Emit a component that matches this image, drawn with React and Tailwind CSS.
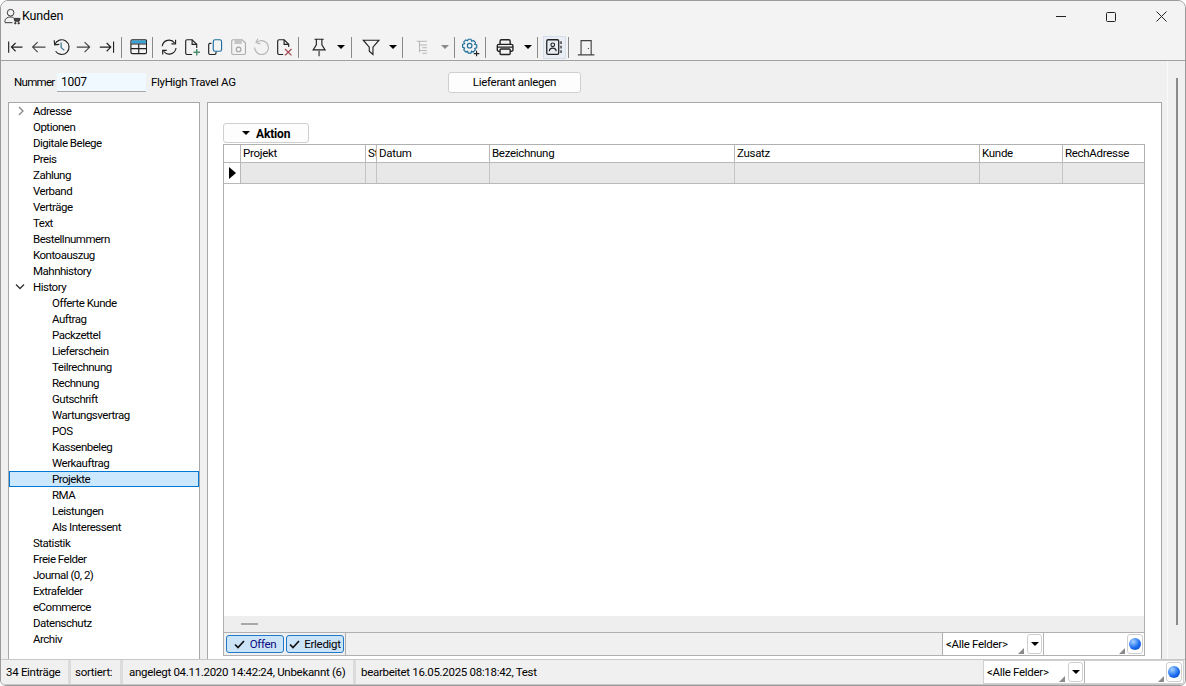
import React from "react";

const S = ({ w = 22, h = 22, children, className = "" }) => (
  <svg width={w * 0.92} height={h * 0.92} viewBox={`0 0 ${w} ${h}`} fill="none" stroke="#222" strokeWidth="1.250" className={className}>{children}</svg>
);

const Slot = ({ children, className = "w-[23px]" }) => (
  <div className={`flex h-[22px] shrink-0 items-center justify-center ${className}`}>{children}</div>
);
const Sep = ({ className = "" }) => <div className={`h-[21px] w-px shrink-0 bg-[#8a8a8a] ${className}`} />;
const Caret = ({ className = "", color = "border-t-black" }) => (
  <div className={`h-0 w-0 shrink-0 border-x-[4px] border-t-[4px] border-x-transparent ${color} ${className}`} />
);

const Icons = {
  first: <S><path d="M4 5v12M19 11H7M11.5 6.5 7 11l4.500 4.500" /></S>,
  back: <S><path d="M19 11H5M10.500 5.500 5 11l5.500 5.500" stroke="#444" /></S>,
  history: (
    <S>
      <path d="M4.200 8A8 8 0 1 1 5 15.500" />
      <path d="M3.500 3.500 4 8.500l5-.5" />
      <path d="M11 6v5.500l3.500 3" stroke="#2a6f8a" />
    </S>
  ),
  fwd: <S><path d="M3 11h14M11.500 5.500 17 11l-5.500 5.500" stroke="#444" /></S>,
  last: <S><path d="M18 5v12M3 11h12M10.500 6.500 15 11l-4.500 4.500" /></S>,
  table: (
    <S w={19} h={19}>
      <rect x="1" y="2" width="17" height="15" rx="1.500" />
      <path d="M1.500 2.800h16v3.200h-16z" fill="#38a3d8" stroke="none" />
      <path d="M1 6.500h17M1 11.500h17M9.500 6.500V17" />
    </S>
  ),
  refresh: (
    <S>
      <path d="M3.500 10A7.500 7.500 0 0 1 17 6.500" />
      <path d="M18 3v4.500h-4.500" />
      <path d="M18.500 12A7.500 7.500 0 0 1 5 15.500" />
      <path d="M4 19v-4.500h4.500" />
    </S>
  ),
  newDoc: (
    <S>
      <path d="M11 19H5.500a1.500 1.500 0 0 1-1.500-1.500v-13A1.500 1.500 0 0 1 5.500 3H11l5 5v4" />
      <path d="M11 3v5h5" />
      <path d="M16 13v7M12.500 16.500h7" stroke="#4c8c6f" strokeWidth="1.600" />
    </S>
  ),
  copy: (
    <S>
      <path d="M7 7H5.500A1.500 1.500 0 0 0 4 8.500v9A1.500 1.500 0 0 0 5.500 19h5a1.500 1.500 0 0 0 1.500-1.500V16" />
      <rect x="9" y="3" width="9" height="12.500" rx="2" stroke="#1b6e9f" />
    </S>
  ),
  save: (
    <S>
      <path d="M4 4.500A1.500 1.500 0 0 1 5.500 3h10L19 6.500v11a1.500 1.500 0 0 1-1.500 1.500h-12A1.500 1.500 0 0 1 4 17.500z" stroke="#adadad" />
      <path d="M7 3h8v4.500H7z" fill="#c4c4c4" stroke="none" />
      <circle cx="11.500" cy="13.500" r="2.500" stroke="#a5a5a5" />
    </S>
  ),
  undo: (
    <S>
      <path d="M7 5.500A7.500 7.500 0 1 1 4 11.500" stroke="#b5b5b5" />
      <path d="M7.500 2 5.500 6l4.500 1.500" stroke="#b5b5b5" />
    </S>
  ),
  del: (
    <S>
      <path d="M10 19H5.500A1.500 1.500 0 0 1 4 17.500v-13A1.500 1.500 0 0 1 5.500 3H11l5 5v3" />
      <path d="M11 3v5h5" />
      <path d="m12 13 7 7M19 13l-7 7" stroke="#a34a55" strokeWidth="1.400" />
    </S>
  ),
  pin: (
    <S>
      <path d="M6 2.500h10M8 2.500v6L4.500 14h13L14 8.500v-6" />
      <path d="M11 14v7" stroke="#777" strokeWidth="2" />
    </S>
  ),
  filter: <S><path d="M2.500 3.500h17L13 11v8l-4-3.500V11z" /></S>,
  tree: (
    <S w={18} h={18}>
      <path d="M3 2.500h11M6 2.500v12M6 6.500h8M9 9.500h5M6 12.500h8M9 15.500h5" stroke="#b0b0b0" strokeWidth="1" />
    </S>
  ),
  gear: (
    <S>
      <path d="M9 2.500h3l.7 2.200 2-.9 2.200 2.200-.9 2 2.200.7v3l-2.200.7.7 1.700-2.200 2.200-2-.9-.6 2.100H9l-.7-2.100-2 .9-2.200-2.200.9-2L2.800 11V8l2.200-.7-.9-2 2.200-2.200 2 .9z" stroke="#1f6f9c" />
      <circle cx="10.500" cy="9.500" r="2.500" stroke="#1f6f9c" />
      <path d="M18 15v6M15 18h6" stroke="#222" />
    </S>
  ),
  print: (
    <S>
      <path d="M5.500 8V4.500A1.500 1.500 0 0 1 7 3h8a1.500 1.500 0 0 1 1.500 1.500V8" strokeWidth="1.500" />
      <path d="M5.500 15.500H4A1.500 1.500 0 0 1 2.500 14V9.500A1.500 1.500 0 0 1 4 8h14a1.500 1.500 0 0 1 1.500 1.500V14a1.500 1.500 0 0 1-1.500 1.500h-1.500" strokeWidth="1.500" />
      <rect x="5.500" y="13" width="11" height="6" rx="1" strokeWidth="1.500" />
      <path d="M2.500 11h17" strokeWidth="1.500" />
    </S>
  ),
  contact: (
    <S>
      <rect x="3" y="3" width="13" height="16" rx="1.500" strokeWidth="1.400" />
      <circle cx="9.500" cy="8.500" r="2" />
      <path d="M5.800 15.500c0-4.500 7.400-4.500 7.400 0" />
      <path d="M18.500 4.500v3M18.500 9.500v3M18.500 14.500v3" strokeWidth="1.400" />
    </S>
  ),
  door: (
    <S>
      <path d="M5.500 19V4h11v15M2 19.500h18" stroke="#444" />
      <path d="M13.500 12v1" stroke="#444" />
    </S>
  ),
};

const tree = [
  ["Adresse", 1, "r"], ["Optionen", 1], ["Digitale Belege", 1], ["Preis", 1], ["Zahlung", 1], ["Verband", 1],
  ["Verträge", 1], ["Text", 1], ["Bestellnummern", 1], ["Kontoauszug", 1], ["Mahnhistory", 1], ["History", 1, "d"],
  ["Offerte Kunde", 2], ["Auftrag", 2], ["Packzettel", 2], ["Lieferschein", 2], ["Teilrechnung", 2], ["Rechnung", 2],
  ["Gutschrift", 2], ["Wartungsvertrag", 2], ["POS", 2], ["Kassenbeleg", 2], ["Werkauftrag", 2], ["Projekte", 2, "s"],
  ["RMA", 2], ["Leistungen", 2], ["Als Interessent", 2], ["Statistik", 1], ["Freie Felder", 1], ["Journal (0, 2)", 1],
  ["Extrafelder", 1], ["eCommerce", 1], ["Datenschutz", 1], ["Archiv", 1],
];

const cols = [
  ["Projekt", "w-[125px]"], ["St", "w-[11px]"], ["Datum", "w-[113px]"], ["Bezeichnung", "w-[245px]"],
  ["Zusatz", "w-[245px]"], ["Kunde", "w-[83px]"], ["RechAdresse", "flex-1"],
];

const Grip = () => (
  <svg width="6" height="6" viewBox="0 0 6 6" className="absolute bottom-[1px] right-[1px]"><path d="M6 0v6H0z" fill="#8a8a8a" /></svg>
);
const Globe = () => (
  <div className="flex h-[20px] w-[16px] shrink-0 items-center justify-center rounded-[3px] border border-[#cfcfcf] bg-white">
    <div className="h-[12px] w-[12px] shrink-0 rounded-full bg-[radial-gradient(circle_at_35%_30%,#a8d4ff,#1a6cf0_55%,#0b3fb0)]" />
  </div>
);
const Combo = () => (
  <>
    <div className="relative flex h-full w-[101px] shrink-0 items-center border-r border-[#b4b4b4] pl-[3px]">
      <span className="pt-px">&lt;Alle Felder&gt;</span>
      <div className="absolute right-[1px] top-[1px] flex h-[20px] w-[15px] items-center justify-center rounded-[3px] border border-[#cfcfcf] bg-white"><Caret /></div>
      <div className="absolute bottom-0 right-[18px] h-[6px] w-[6px]"><Grip /></div>
    </div>
    <div className="relative flex h-full flex-1 items-center justify-end pr-[1px]">
      <div className="absolute bottom-0 right-[18px] h-[6px] w-[6px]"><Grip /></div>
      <Globe />
    </div>
  </>
);

const Check = () => (
  <svg width="11" height="9" viewBox="0 0 11 9" fill="none" stroke="#111" strokeWidth="1.700"><path d="m1 4.500 3 3L10 1" /></svg>
);

export default function App() {
  return (
    <div className="flex h-[686px] w-[1186px] flex-col overflow-hidden whitespace-nowrap rounded-t-[8px] rounded-b-[6px] border border-[#9a9a9a] bg-[#f0f0f0] font-['Roboto',sans-serif] text-[11.5px] leading-none tracking-[-0.3px] text-black">
      <div className="flex h-[31px] shrink-0 items-center bg-[#f3f3f3]">
        <svg width="19" height="19" viewBox="0 0 20 20" fill="none" stroke="#333" strokeWidth="1" className="ml-[2px]">
          <circle cx="8" cy="6" r="3.500" />
          <path d="M2 16v-1c0-3 3-4.500 6-4.500 1 0 2 .2 3 .5M2 16.500h8" />
          <path d="M11.500 12h6.500l-1 3h-4.500z" fill="#444" />
          <circle cx="13" cy="17" r=".8" fill="#333" />
          <circle cx="16.500" cy="17" r=".8" fill="#333" />
        </svg>
        <span className="text-[12.5px] tracking-[-0.15px]">Kunden</span>
        <div className="ml-auto flex items-center">
          <Slot className="w-[46px]"><div className="h-px w-[10px] bg-[#222]" /></Slot>
          <Slot className="w-[46px] ml-[4px]"><div className="h-[10px] w-[10px] rounded-[1.500px] border border-[#222]" /></Slot>
          <Slot className="w-[46px] ml-[4px] mr-[1px]">
            <svg width="11" height="11" viewBox="0 0 11 11" stroke="#222"><path d="m.5.5 10 10M10.500.5l-10 10" /></svg>
          </Slot>
        </div>
      </div>

      <div className="flex h-[29px] shrink-0 items-center border-b border-[#a0a0a0] bg-[#f3f3f3] pt-[2px] pl-[3px]">
        <Slot>{Icons.first}</Slot><Slot>{Icons.back}</Slot><Slot>{Icons.history}</Slot><Slot>{Icons.fwd}</Slot><Slot>{Icons.last}</Slot>
        <Sep className="ml-[2px] mr-[5px]" />
        <Slot>{Icons.table}</Slot>
        <Sep className="ml-[2px] mr-[5px]" />
        <Slot>{Icons.refresh}</Slot><Slot>{Icons.newDoc}</Slot><Slot>{Icons.copy}</Slot><Slot>{Icons.save}</Slot><Slot>{Icons.undo}</Slot><Slot>{Icons.del}</Slot>
        <Sep className="ml-[2px] mr-[9px]" />
        <Slot>{Icons.pin}</Slot>
        <Caret className="ml-[6px]" />
        <Sep className="ml-[6px] mr-[8px]" />
        <Slot>{Icons.filter}</Slot>
        <Caret className="ml-[6px]" />
        <Sep className="ml-[5px] mr-[8px]" />
        <Slot>{Icons.tree}</Slot>
        <Caret color="border-t-[#8a8a8a]" className="ml-[7px]" />
        <Sep className="ml-[5px] mr-[4px]" />
        <Slot>{Icons.gear}</Slot>
        <Sep className="ml-[3px] mr-[8px]" />
        <Slot>{Icons.print}</Slot>
        <Caret className="ml-[7px]" />
        <Sep className="ml-[5px] mr-[5px]" />
        <div className="flex h-[23px] w-[23px] shrink-0 items-center justify-center border border-[#d5deea] bg-[#e9eef5]">{Icons.contact}</div>
        <Sep className="ml-[2px] mr-[6px]" />
        <Slot>{Icons.door}</Slot>
      </div>

      <div className="flex min-h-0 flex-1">
        <div className="flex min-w-0 flex-1 flex-col">
          <div className="flex h-[41px] shrink-0 items-center pl-[13px] pt-[2px]">
            <span className="w-[43px] tracking-[-0.7px]">Nummer</span>
            <div className="flex h-[19px] w-[89px] items-center border-b border-[#a8a8a8] bg-[#f0f9ff] pl-[4px] text-[12px]">1007</div>
            <span className="ml-[5px] w-[297px] pt-px">FlyHigh Travel AG</span>
            <button className="h-[21px] w-[133px] rounded-[3px] border border-[#cfcfcf] bg-[#fdfdfd] pt-px">Lieferant anlegen</button>
          </div>

          <div className="flex min-h-0 flex-1 pl-[7px]">
            <div className="h-full w-[192px] shrink-0 border border-b-0 border-[#a8a8a8] bg-white tracking-[-0.5px]">
              {tree.map(([t, lvl, f]) => (
                <div
                  key={t}
                  className={`relative flex h-[16px] items-center pt-px ${lvl === 1 ? "pl-[24px]" : "pl-[43px]"} ${f === "s" ? "outline outline-1 -outline-offset-1 outline-[#0078d4] bg-[#cce8ff]" : ""}`}
                >
                  {f === "r" && (
                    <svg width="8" height="10" viewBox="0 0 8 10" fill="none" stroke="#888" strokeWidth="1.300" className="absolute left-[8px] top-[3px]"><path d="m2 1 4 4-4 4" /></svg>
                  )}
                  {f === "d" && (
                    <svg width="10" height="8" viewBox="0 0 10 8" fill="none" stroke="#333" strokeWidth="1.300" className="absolute left-[6px] top-[4px]"><path d="m1 1.500 4 4 4-4" /></svg>
                  )}
                  <span>{t}</span>
                </div>
              ))}
            </div>

            <div className="ml-[7px] flex h-full w-[955px] shrink-0 flex-col border border-b-0 border-[#a8a8a8] bg-white pb-[3px] pl-[15px] pr-[16px] pt-[20px]">
              <button className="mb-px flex h-[20px] w-[86px] shrink-0 items-center rounded-[3px] border border-[#cfcfcf] bg-[#fdfdfd] pl-[18px] text-[12px] font-bold tracking-[-0.15px]">
                <Caret /><span className="ml-[6px] pt-px">Aktion</span>
              </button>
              <div className="flex min-h-0 flex-1 flex-col border border-[#b0b0b0]">
                <div className="flex h-[18px] shrink-0 border-b border-[#b8b8b8]">
                  <div className="w-[17px] shrink-0 border-r border-[#b8b8b8]" />
                  {cols.map(([t, w]) => (
                    <div key={t} className={`flex items-center overflow-hidden border-r border-[#b8b8b8] pl-[2px] pt-px last:border-r-0 ${w}`}>{t}</div>
                  ))}
                </div>
                <div className="flex h-[21px] shrink-0 border-b border-[#b8b8b8]">
                  <div className="flex w-[17px] shrink-0 items-center justify-center border-r border-[#b8b8b8]">
                    <div className="h-0 w-0 border-y-[6px] border-l-[7px] border-y-transparent border-l-black" />
                  </div>
                  {cols.map(([t, w]) => (
                    <div key={t} className={`border-r border-[#c4c4c4] bg-[#e8e8e8] last:border-r-0 ${w}`} />
                  ))}
                </div>
                <div className="min-h-0 flex-1" />
                <div className="flex h-[17px] shrink-0 items-center border-b border-[#b0b0b0] bg-[#eeeeee] pl-[17px]">
                  <div className="h-[2px] w-[17px] bg-[#a8a8a8]" />
                </div>
                <div className="flex h-[22px] shrink-0 items-center bg-[#f0f0f0]">
                  <div className="flex h-full w-[122px] shrink-0 items-center gap-[2px] border-r border-[#b0b0b0] pl-[2px]">
                    <div className="flex h-[18px] w-[58px] items-center justify-center gap-[5px] rounded-[3px] border border-[#1f78c8] bg-[#cce4f7] pt-px text-[#0a0a80]"><Check />Offen</div>
                    <div className="flex h-[18px] w-[58px] items-center justify-center gap-[4px] rounded-[3px] border border-[#1f78c8] bg-[#cce4f7] pt-px"><Check />Erledigt</div>
                  </div>
                  <div className="h-full flex-1" />
                  <div className="flex h-full w-[202px] shrink-0 border-l border-[#b0b0b0] bg-white"><Combo /></div>
                </div>
              </div>
            </div>
          </div>
        </div>

        <div className="flex w-[18px] shrink-0 justify-center border-l border-[#fafafa] pb-[34px] pt-[17px]">
          <div className="h-full w-[2px] bg-[#8a8a8a]" />
        </div>
      </div>

      <div className="flex h-[26px] shrink-0 items-center border-y border-[#c8c8c8] bg-[#f0f0f0] pr-[1px]">
        <div className="flex h-full w-[70px] shrink-0 items-center border-r-[3px] border-[#dcdcdc] pl-[5px] pt-px">34 Einträge</div>
        <div className="flex h-full w-[52px] shrink-0 items-center border-r-[3px] border-[#dcdcdc] pl-[4px] pt-px">sortiert:</div>
        <div className="flex h-full w-[233px] shrink-0 items-center border-r-[3px] border-[#dcdcdc] pl-[6px] pt-px">angelegt 04.11.2020 14:42:24, Unbekannt (6)</div>
        <div className="flex h-full flex-1 items-center pl-[5px] pt-px">bearbeitet 16.05.2025 08:18:42, Test</div>
        <div className="flex h-[24px] w-[201px] shrink-0 border border-[#d0d0d0] bg-white"><Combo /></div>
      </div>
    </div>
  );
}
